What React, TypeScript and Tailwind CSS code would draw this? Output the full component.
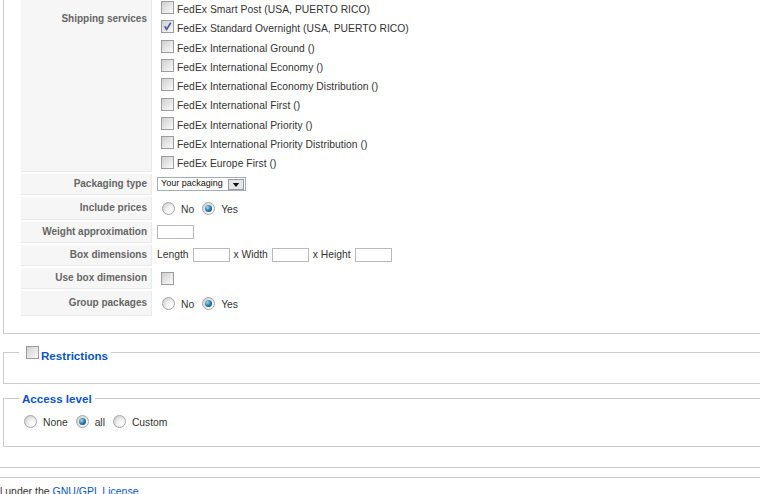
import React from "react";

type Service = { name: string; checked: boolean };

const services: Service[] = [
  { name: "FedEx Smart Post (USA, PUERTO RICO)", checked: false },
  { name: "FedEx Standard Overnight (USA, PUERTO RICO)", checked: true },
  { name: "FedEx International Ground ()", checked: false },
  { name: "FedEx International Economy ()", checked: false },
  { name: "FedEx International Economy Distribution ()", checked: false },
  { name: "FedEx International First ()", checked: false },
  { name: "FedEx International Priority ()", checked: false },
  { name: "FedEx International Priority Distribution ()", checked: false },
  { name: "FedEx Europe First ()", checked: false },
];

const Checkbox: React.FC<{ checked?: boolean; className?: string }> = ({ checked = false, className = "" }) => (
  <span
    className={`relative inline-block h-[13px] w-[13px] shrink-0 border border-[#9c9c9c] bg-gradient-to-br from-[#cfcfcf] to-[#fbfbfb] ${className}`}
  >
    {checked && (
      <svg viewBox="0 0 11 11" className="absolute left-0 top-0 h-[11px] w-[11px]">
        <path d="M2.6 5.2 L4.6 8.4 L8.8 1.8" fill="none" stroke="#4f5ea4" strokeWidth="1.7" />
      </svg>
    )}
  </span>
);

const Radio: React.FC<{ checked?: boolean }> = ({ checked = false }) => (
  <span className="ml-[5px] flex h-[13px] w-[13px] shrink-0 items-center justify-center rounded-full border border-[#a6a6a6] bg-[radial-gradient(circle_at_70%_70%,#ffffff,#f0f0f0_40%,#c4c4c4)]">
    {checked && (
      <span className="h-[7px] w-[7px] rounded-full bg-[radial-gradient(circle_at_35%_35%,#9fd8f5,#22729f_55%,#0b3f6a)]" />
    )}
  </span>
);

const RadioGroup: React.FC<{ options: string[]; value: string }> = ({ options, value }) => (
  <div className="flex items-center gap-[3px]">
    {options.map((opt) => (
      <span key={opt} className="flex items-center">
        <Radio checked={opt === value} />
        <span className="ml-[6px] pt-[4px]">{opt}</span>
      </span>
    ))}
  </div>
);

const Key: React.FC<{ children: React.ReactNode }> = ({ children }) => (
  <div className="flex items-center justify-end border-b border-r border-[#e9e9e9] bg-[#f6f6f6] pr-[4px] text-[10px] font-bold text-[#666]">
    {children}
  </div>
);

const TextBox: React.FC = () => (
  <span className="inline-block h-[14px] w-[37px] shrink-0 border border-[#b9b9b9] bg-white" />
);

export default function App() {
  return (
    <div className="h-[494px] w-[760px] overflow-hidden bg-white font-['Liberation_Sans',Arial,sans-serif] text-[10.3px] text-[#333]">
      {/* FedEx carrier settings */}
      <div className="-mt-[2px] ml-[3px] border-b border-l border-[#ccc] pb-[17px] pl-[17px]">
        <div className="grid grid-cols-[131px_1fr] gap-x-[3px] gap-y-[2px]">
          <div className="flex justify-end border-b border-r border-[#e9e9e9] bg-[#f6f6f6] pr-[4px] pt-[13px] text-[10px] font-bold text-[#666]">
            Shipping services
          </div>
          <div className="pl-[2px]">
            {services.map((s) => (
              <label key={s.name} className="flex h-[19.3px] items-center">
                <Checkbox checked={s.checked} className="ml-[4px] mr-[3px]" />
                <span className="pt-[4px] tracking-[0.05px]">{s.name}</span>
              </label>
            ))}
          </div>

          <Key>Packaging type</Key>
          <div className="flex h-[21px] items-center pl-[2px]">
            <div className="flex h-[14px] w-[89px] items-center justify-between border border-[#a5acb2] bg-white pl-[3px] pr-[1px] text-[9px] text-[#111]">
              <span>Your packaging</span>
              <span className="flex h-[11px] w-[16px] items-end justify-center border border-[#9a9a9a] bg-[#e6e6e6] pb-[2px]">
                <svg viewBox="0 0 8 5" className="h-[4px] w-[8px]">
                  <path d="M0 0 H8 L4 5 Z" fill="#111" />
                </svg>
              </span>
            </div>
          </div>

          <Key>Include prices</Key>
          <div className="flex h-[23px] items-center pl-[2px]">
            <RadioGroup options={["No", "Yes"]} value="Yes" />
          </div>

          <Key>Weight approximation</Key>
          <div className="flex h-[21px] items-center pl-[2px]">
            <TextBox />
          </div>

          <Key>Box dimensions</Key>
          <div className="flex h-[21px] items-center gap-[4px] pl-[2px]">
            <span>Length</span>
            <TextBox />
            <span>x Width</span>
            <TextBox />
            <span>x Height</span>
            <TextBox />
          </div>

          <Key>Use box dimension</Key>
          <div className="flex h-[21px] items-center pl-[2px]">
            <Checkbox className="ml-[4px]" />
          </div>

          <Key>Group packages</Key>
          <div className="flex h-[25px] items-center pl-[2px]">
            <RadioGroup options={["No", "Yes"]} value="Yes" />
          </div>
        </div>
      </div>

      {/* Restrictions */}
      <fieldset className="ml-[3px] mt-[12px] border border-r-0 border-[#ccc] pl-[15px]">
        <legend className="px-[3px] text-[11.6px] leading-[14px] font-bold text-[#0b55c4]">
          <span className="flex h-[14px] items-center">
            <Checkbox className="ml-[4px] mr-[2px]" />
            <span className="translate-y-[3px]">Restrictions</span>
          </span>
        </legend>
        <div className="h-[23px]" />
      </fieldset>

      {/* Access level */}
      <fieldset className="ml-[3px] mt-[8px] border border-r-0 border-[#ccc] pb-[17px] pl-[15px] pt-[8px]">
        <legend className="px-[3px] text-[11.6px] leading-[14px] font-bold text-[#0b55c4]">Access level</legend>
        <div className="flex h-[15px] items-center">
          <RadioGroup options={["None", "all", "Custom"]} value="all" />
        </div>
      </fieldset>

      <div className="mt-[20px] border-t border-[#ccc]" />
      <div className="mt-[9px] border-t border-[#ccc] pt-[6px] text-[10.5px] leading-[15px]">
        l under the <a className="text-[#0b55c4]">GNU/GPL License</a>
      </div>
    </div>
  );
}
